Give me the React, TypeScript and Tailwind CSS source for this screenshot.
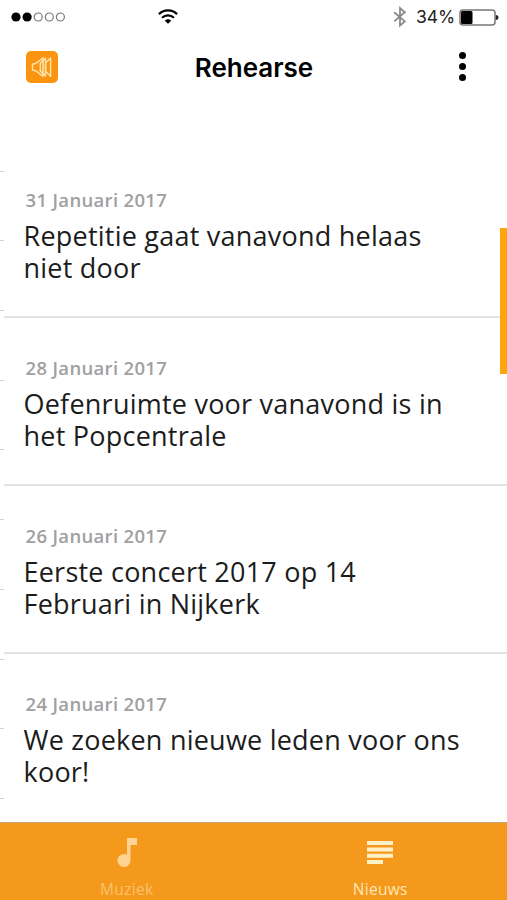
const news = [
  { date: "31 Januari 2017", title: "Repetitie gaat vanavond helaas niet door" },
  { date: "28 Januari 2017", title: "Oefenruimte voor vanavond is in het Popcentrale" },
  { date: "26 Januari 2017", title: "Eerste concert 2017 op 14 Februari in Nijkerk" },
  { date: "24 Januari 2017", title: "We zoeken nieuwe leden voor ons koor!" },
];

const signal = [true, true, false, false, false];

function StatusBar() {
  return (
    <div className="grid h-[34px] grid-cols-[157px_1fr_auto] items-center pr-2 pl-[10.5px]">
      <svg width="56" height="12" viewBox="0 0 56 12">
        {signal.map((on, i) => (
          <circle
            key={i}
            cx={5 + i * 11.1}
            cy="6"
            r={on ? 4.6 : 4}
            fill={on ? "#000" : "none"}
            stroke={on ? "none" : "#777"}
            strokeWidth="1.2"
          />
        ))}
      </svg>
      <svg width="20" height="16" viewBox="0 0 20 16" fill="none" stroke="#000" className="-ml-[10px]">
        <path d="M.9 5.1a13.2 13.2 0 0 1 18.2 0" strokeWidth="2.2" />
        <path d="M4 8.8a8.6 8.6 0 0 1 12 0" strokeWidth="2.1" />
        <path d="M10 14.8 6.8 11.7a4.7 4.7 0 0 1 6.4 0z" fill="#000" stroke="none" />
      </svg>
      <div className="flex items-center">
        <svg width="14" height="22" viewBox="0 0 14 22" fill="none" stroke="#8a8a8a" strokeWidth="1.8">
          <path d="m1.2 6.2 10.6 9.2L7 19.6V2l4.8 4.2L1.2 15.4" />
        </svg>
        <span className="ml-[9px] w-[41px] font-['Inter'] text-[17.5px] leading-5 whitespace-nowrap text-[#222]">
          34%
        </span>
        <svg width="40" height="17" viewBox="0 0 40 17" className="ml-[2px]">
          <rect x="1" y="1" width="35" height="15" rx="3" fill="none" stroke="#777" strokeWidth="1.5" />
          <rect x="2" y="2" width="11.5" height="13" rx="1.5" fill="#000" />
          <path d="M36.8 6c3.6 0 3.6 5 0 5z" fill="#222" />
        </svg>
      </div>
    </div>
  );
}

function Header() {
  return (
    <header className="grid h-[67px] grid-cols-[1fr_auto_1fr] items-center pl-[26px] pr-[25px]">
      <div className="-mt-px flex size-8 items-center justify-center rounded-[5px] bg-[#fb9410]">
        <svg width="22" height="22" viewBox="0 0 22 22" fill="none" stroke="#ffe3a8" strokeWidth="1.5" strokeLinejoin="round">
          <path d="M1.5 8.2 5 7.3l7-5.5v18.6l-7-5.5-3.5-.9z" />
          <path d="M14.5 2.3v17.6l-5.2-5V7.3z" />
          <path d="M19.6 2v18.2l-5-5V7z" />
        </svg>
      </div>
      <h1 className="font-['Inter'] text-[26px] leading-8 font-semibold text-black">Rehearse</h1>
      <div className="-mt-[3px] mr-4 flex flex-col gap-[4px] justify-self-end">
        <span className="size-[7px] rounded-full bg-black" />
        <span className="size-[7px] rounded-full bg-black" />
        <span className="size-[7px] rounded-full bg-black" />
      </div>
    </header>
  );
}

export default function App() {
  return (
    <div className="relative flex h-[900px] w-[507px] flex-col overflow-hidden bg-white font-['Open_Sans','Noto_Sans',sans-serif]">
      <StatusBar />
      <Header />
      <main className="flex min-h-0 flex-1 overflow-hidden">
        {/* edge of the list underneath */}
        <div className="w-1 shrink-0 pt-px">
          {Array.from({ length: 10 }, (_, i) => (
            <div key={i} className="h-[69.7px] border-b border-[#d4d4d4]" />
          ))}
        </div>
        <div className="flex-1 pt-[49px]">
          {news.map((item) => (
            <article
              key={item.date}
              className="h-[168px] border-b-2 border-[#e2e2e2] pt-[38px] pl-[19.5px] last:border-b-0"
            >
              <p className="ml-[2px] text-[18.5px] leading-6 font-semibold tracking-[0.33px] text-[#a0a0a0]">
                {item.date}
              </p>
              <h2 className="mt-2 w-[445px] text-[27px] leading-8 tracking-[0.23px] text-[#1c1c1c]">{item.title}</h2>
            </article>
          ))}
        </div>
      </main>
      <div className="absolute top-[228px] right-0 h-[146px] w-[7px] bg-[#fca50e]" />
      <nav className="grid h-[78px] shrink-0 grid-cols-2 border-t border-[#cba873] bg-[#f5991c]">
        <div className="flex flex-col items-center text-[#ffd391]">
          <svg width="20" height="30" viewBox="0 0 20 30" fill="currentColor" className="mt-[15px]">
            <path d="M10 0h10v7h-6.5v15.5A6.5 6.5 0 1 1 10 16.7z" />
          </svg>
          <span className="mt-[11px] text-[15.5px] leading-5 tracking-[0.3px] text-[#fbc16f]">Muziek</span>
        </div>
        <div className="flex flex-col items-center text-[#fff0c8]">
          <svg width="26" height="23" viewBox="0 0 26 23" fill="currentColor" className="mt-[18px]">
            <path d="M0 0h26v4H0zM0 6.4h26v4H0zM0 12.8h26v4H0zM0 19h16v4H0z" />
          </svg>
          <span className="mt-[15px] text-[15.5px] leading-5 font-medium tracking-[0.3px] text-[#ffe7b5]">Nieuws</span>
        </div>
      </nav>
    </div>
  );
}
